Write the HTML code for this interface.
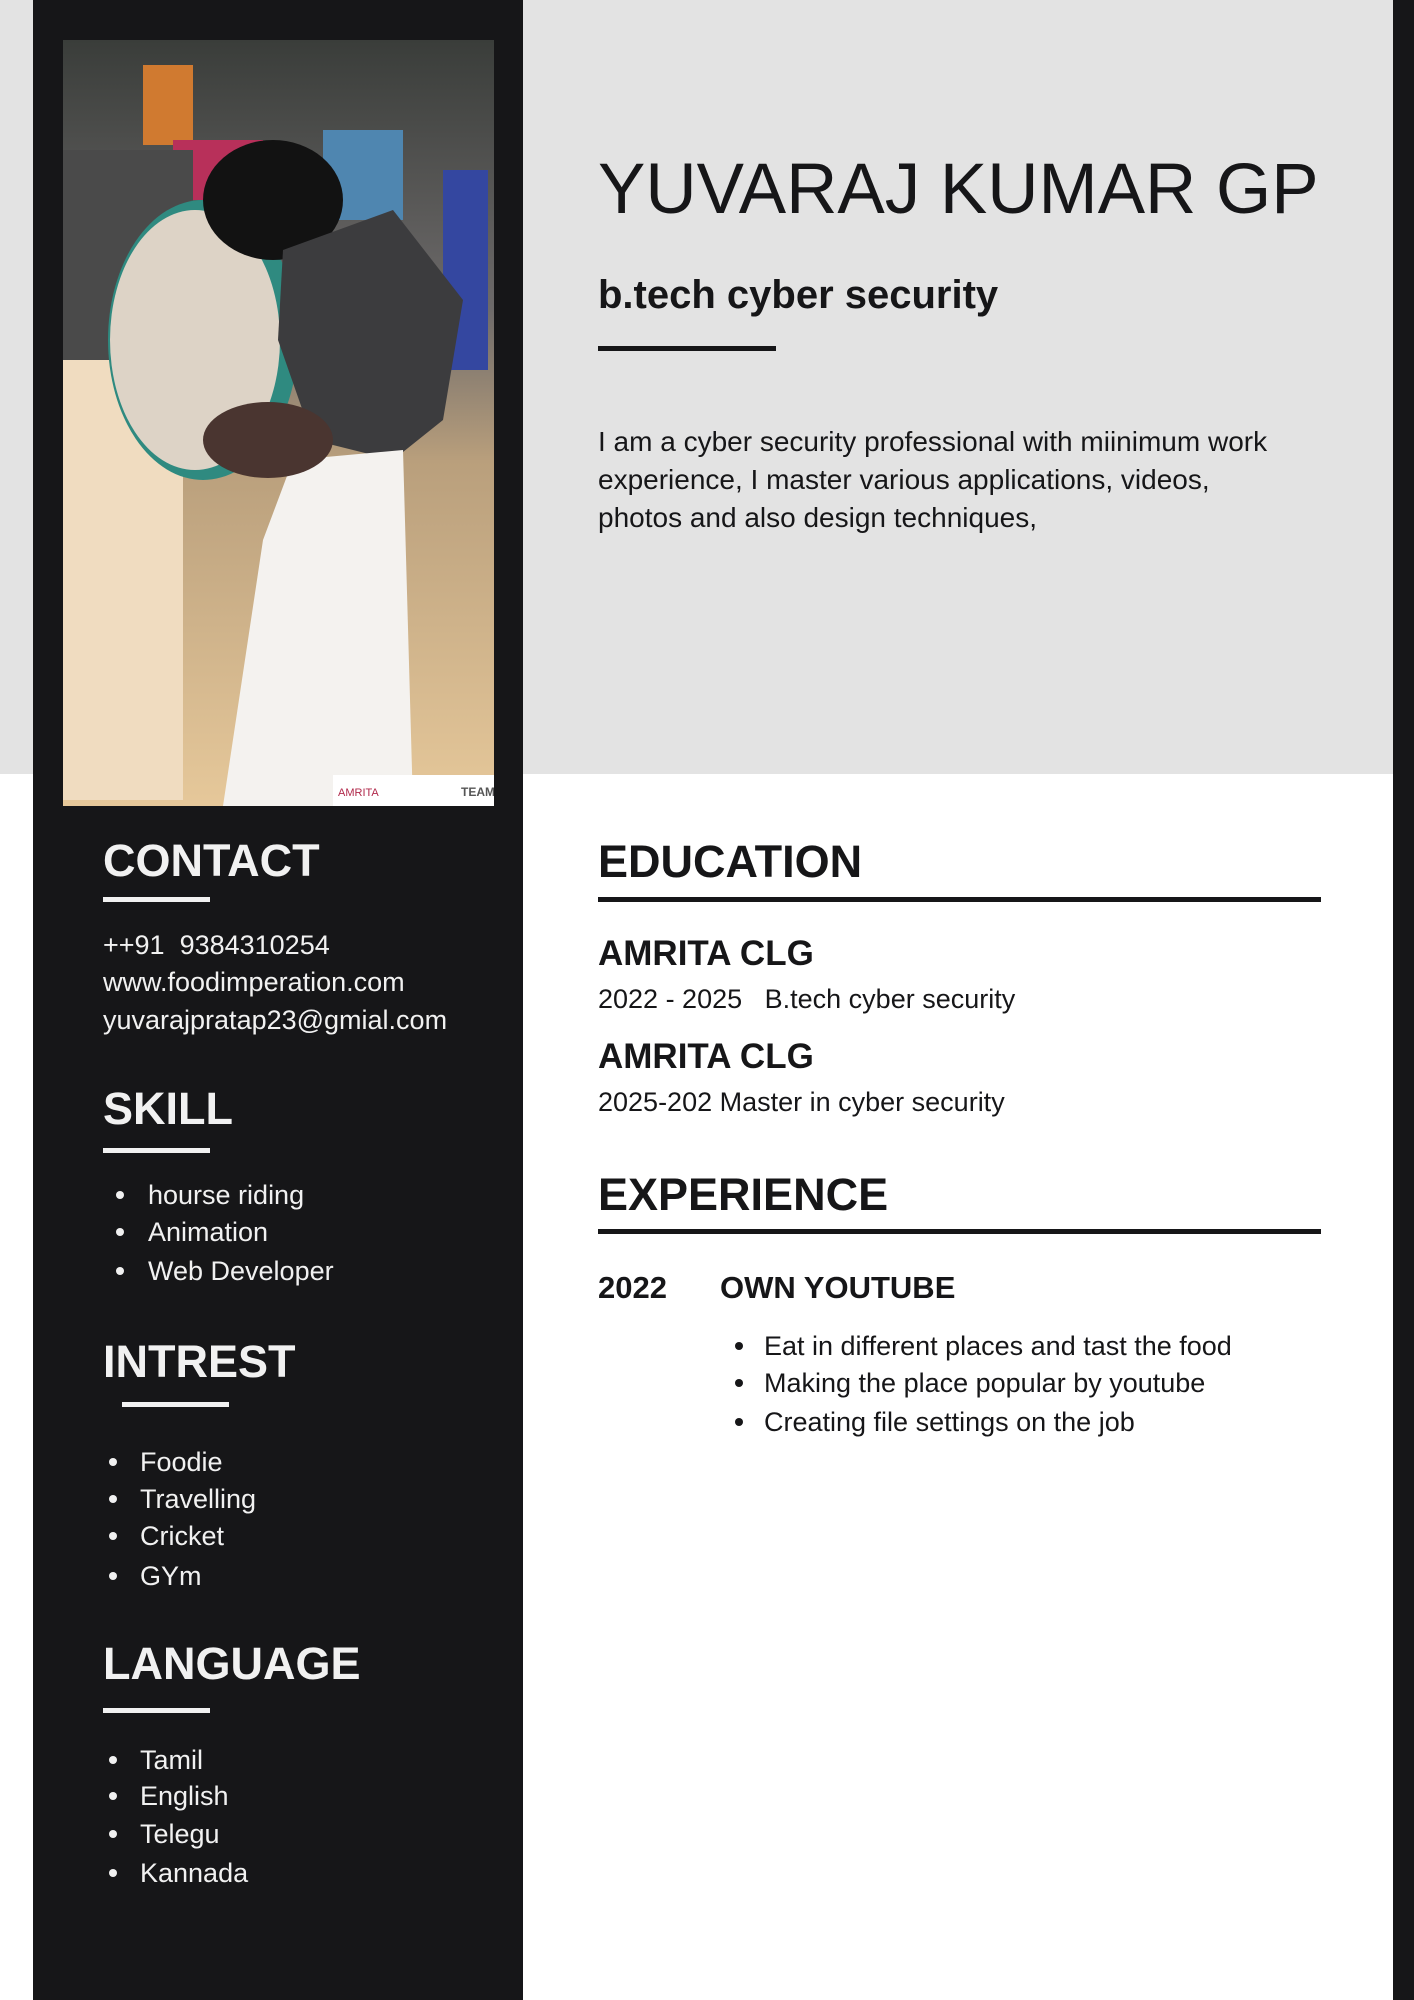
<!DOCTYPE html>
<html><head><meta charset="utf-8"><style>
*{margin:0;padding:0;box-sizing:border-box}
body{width:1414px;height:2000px;position:relative;background:#fff;font-family:"Liberation Sans",sans-serif;overflow:hidden;color:#161618}
.a{position:absolute;white-space:nowrap}
.top{position:absolute;left:0;top:0;width:1414px;height:774px;background:#e3e3e3}
.side{position:absolute;left:33px;top:0;width:490px;height:2000px;background:#161618}
.rs{position:absolute;left:1393px;top:0;width:21px;height:2000px;background:#161618}
.w{color:#f1f1f1}
.h{font-weight:bold;font-size:45px;line-height:50px}
.bar{position:absolute;height:5px;background:#f1f1f1}
.bk{position:absolute;height:5px;background:#161618}
.t{font-size:27px;line-height:30px}
.dot{position:absolute;width:8px;height:8px;border-radius:50%}
</style></head><body>
<div class="top"></div>
<div class="side"></div>
<div class="rs"></div>

<svg class="a" style="left:63px;top:40px" width="431" height="766" viewBox="0 0 431 766">
<defs><linearGradient id="bg" x1="0" y1="0" x2="0" y2="1">
<stop offset="0" stop-color="#3a3d3a"/><stop offset=".35" stop-color="#6d6a6a"/><stop offset=".55" stop-color="#b99f7c"/><stop offset="1" stop-color="#e6c89a"/></linearGradient></defs>
<rect width="431" height="766" fill="url(#bg)"/>
<rect x="80" y="25" width="50" height="80" fill="#d07a30"/>
<rect x="110" y="100" width="90" height="60" fill="#b8305a"/>
<rect x="260" y="90" width="80" height="90" fill="#4f86b0"/>
<rect x="380" y="130" width="45" height="200" fill="#3447a0"/>
<rect x="0" y="110" width="130" height="320" fill="#4a4a4a"/>
<rect x="0" y="320" width="120" height="440" fill="#f0dcc0"/>
<ellipse cx="140" cy="300" rx="95" ry="140" fill="#2f8a80"/>
<ellipse cx="132" cy="300" rx="85" ry="130" fill="#ddd3c6"/>
<ellipse cx="210" cy="160" rx="70" ry="60" fill="#121212"/>
<path d="M220 210 L330 170 L400 260 L380 380 L330 420 L250 400 L215 300Z" fill="#3c3c3e"/>
<path d="M230 420 L340 410 L350 766 L160 766 L200 500Z" fill="#f4f2ef"/>
<ellipse cx="205" cy="400" rx="65" ry="38" fill="#4a3530"/>
<rect x="270" y="735" width="161" height="31" fill="#fff"/>
<text x="275" y="756" font-size="11" fill="#b0284a" font-family="Liberation Sans">AMRITA</text>
<text x="398" y="756" font-size="12" font-weight="bold" fill="#555" font-family="Liberation Sans">TEAM</text>
</svg>

<div class="a" style="left:598px;top:150px;font-size:71px;line-height:80px">YUVARAJ KUMAR GP</div>
<div class="a" style="left:598px;top:272px;font-size:40px;line-height:46px;font-weight:bold">b.tech cyber security</div>
<div class="bk" style="left:598px;top:346px;width:178px"></div>
<div class="a" style="left:598px;top:423px;font-size:28px;line-height:38px;white-space:normal;width:790px">I am a cyber security professional with miinimum work<br>experience, I master various applications, videos,<br>photos and also design techniques,</div>

<div class="a h" style="left:598px;top:837px">EDUCATION</div>
<div class="bk" style="left:598px;top:897px;width:723px"></div>
<div class="a" style="left:598px;top:934px;font-size:35px;line-height:40px;font-weight:bold">AMRITA CLG</div>
<div class="a t" style="left:598px;top:984px">2022 - 2025 &nbsp; B.tech cyber security</div>
<div class="a" style="left:598px;top:1037px;font-size:35px;line-height:40px;font-weight:bold">AMRITA CLG</div>
<div class="a t" style="left:598px;top:1087px">2025-202 Master in cyber security</div>

<div class="a h" style="left:598px;top:1170px">EXPERIENCE</div>
<div class="bk" style="left:598px;top:1229px;width:723px"></div>
<div class="a" style="left:598px;top:1270px;font-size:31px;line-height:36px;font-weight:bold">2022</div>
<div class="a" style="left:720px;top:1270px;font-size:31px;line-height:36px;font-weight:bold">OWN YOUTUBE</div>
<div class="dot" style="left:735px;top:1342px;background:#161618"></div>
<div class="a t" style="left:764px;top:1331px">Eat in different places and tast the food</div>
<div class="dot" style="left:735px;top:1379px;background:#161618"></div>
<div class="a t" style="left:764px;top:1368px">Making the place popular by youtube</div>
<div class="dot" style="left:735px;top:1418px;background:#161618"></div>
<div class="a t" style="left:764px;top:1407px">Creating file settings on the job</div>

<div class="a h w" style="left:103px;top:836px">CONTACT</div>
<div class="bar" style="left:103px;top:897px;width:107px"></div>
<div class="a t w" style="left:103px;top:930px">++91 &nbsp;9384310254</div>
<div class="a t w" style="left:103px;top:967px">www.foodimperation.com</div>
<div class="a t w" style="left:103px;top:1005px">yuvarajpratap23@gmial.com</div>

<div class="a h w" style="left:103px;top:1084px">SKILL</div>
<div class="bar" style="left:103px;top:1148px;width:107px"></div>
<div class="dot" style="left:116px;top:1191px;background:#f1f1f1"></div><div class="a t w" style="left:148px;top:1180px">hourse riding</div>
<div class="dot" style="left:116px;top:1228px;background:#f1f1f1"></div><div class="a t w" style="left:148px;top:1217px">Animation</div>
<div class="dot" style="left:116px;top:1267px;background:#f1f1f1"></div><div class="a t w" style="left:148px;top:1256px">Web Developer</div>

<div class="a h w" style="left:103px;top:1337px">INTREST</div>
<div class="bar" style="left:122px;top:1402px;width:107px"></div>
<div class="dot" style="left:109px;top:1458px;background:#f1f1f1"></div><div class="a t w" style="left:140px;top:1447px">Foodie</div>
<div class="dot" style="left:109px;top:1495px;background:#f1f1f1"></div><div class="a t w" style="left:140px;top:1484px">Travelling</div>
<div class="dot" style="left:109px;top:1532px;background:#f1f1f1"></div><div class="a t w" style="left:140px;top:1521px">Cricket</div>
<div class="dot" style="left:109px;top:1572px;background:#f1f1f1"></div><div class="a t w" style="left:140px;top:1561px">GYm</div>

<div class="a h w" style="left:103px;top:1639px">LANGUAGE</div>
<div class="bar" style="left:103px;top:1708px;width:107px"></div>
<div class="dot" style="left:109px;top:1756px;background:#f1f1f1"></div><div class="a t w" style="left:140px;top:1745px">Tamil</div>
<div class="dot" style="left:109px;top:1792px;background:#f1f1f1"></div><div class="a t w" style="left:140px;top:1781px">English</div>
<div class="dot" style="left:109px;top:1830px;background:#f1f1f1"></div><div class="a t w" style="left:140px;top:1819px">Telegu</div>
<div class="dot" style="left:109px;top:1869px;background:#f1f1f1"></div><div class="a t w" style="left:140px;top:1858px">Kannada</div>
</body></html>
